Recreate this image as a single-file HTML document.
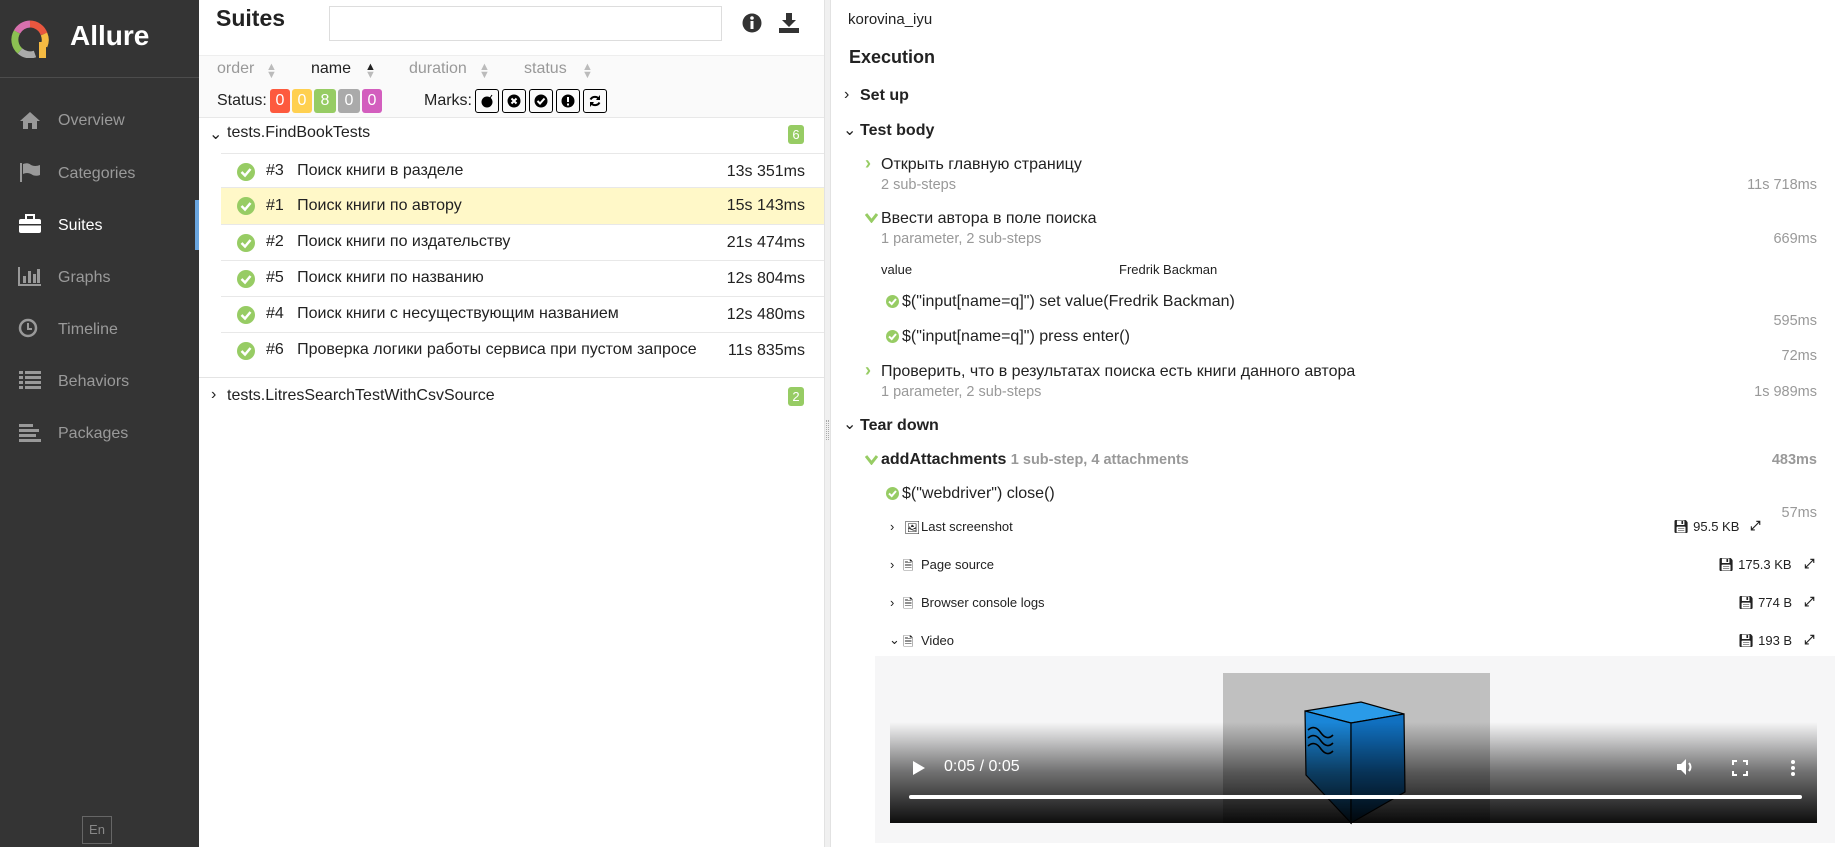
<!DOCTYPE html>
<html><head><meta charset="utf-8"><style>
*{box-sizing:border-box;margin:0;padding:0}
body{width:1835px;height:847px;overflow:hidden;font-family:"Liberation Sans","Noto Sans CJK SC",sans-serif;color:#222;background:#fff;position:relative;font-size:16px}
.a{position:absolute;white-space:nowrap}
#side{position:absolute;left:0;top:0;width:199px;height:847px;background:#343434}
.nav{position:absolute;left:58px;color:#9a9a9a;font-size:16px}
.ni{position:absolute;left:18px;width:24px;height:20px}
.row{position:absolute;left:221px;width:603px;height:36px;border-top:1px solid #e8e8e8}
.row .ck{position:absolute;left:16px;top:9px}
.row .t{position:absolute;right:19px;top:9px}
.gr{color:#999;font-size:14.5px}
.ms{position:absolute;right:18px;color:#999;font-size:14.5px}
.att{font-size:13px}
.sa{position:absolute;color:#bbb;font-size:11px;line-height:8px;top:3px}
</style></head><body>
<div id="side">
 <svg class="a" style="left:10px;top:20px" width="40" height="38" viewBox="0 0 40 38">
  <path d="M20 4 A15 15 0 0 1 34 14" stroke="#e9573f" stroke-width="7" fill="none"/>
  <path d="M34 14 A15 15 0 0 1 34 26" stroke="#f6bb42" stroke-width="7" fill="none"/>
  <path d="M20 4 A15 15 0 0 0 7 12" stroke="#d770ad" stroke-width="7" fill="none"/>
  <path d="M7 12 A15 15 0 0 0 10 31" stroke="#8cc152" stroke-width="7" fill="none"/>
  <path d="M10 31 A15 15 0 0 0 25 34" stroke="#aaa" stroke-width="7" fill="none"/>
  <rect x="29" y="22" width="7" height="16" fill="#f6bb42"/>
 </svg>
 <div class="a" style="left:70px;top:20px;color:#fff;font-size:28px;font-weight:bold">Allure</div>
 <div class="a" style="left:0;top:77px;width:199px;height:1px;background:#4c4c4c"></div>
 <div class="a" style="left:195px;top:200px;width:4px;height:50px;background:#6aa6e0"></div>
 <svg class="ni" style="top:110px" viewBox="0 0 24 20"><path d="M12 2 L22 11 H19 V19 H14 V13 H10 V19 H5 V11 H2 Z" fill="#999"/></svg>
 <div class="nav" style="top:112px">Overview</div>
 <svg class="ni" style="top:162px" viewBox="0 0 24 20"><rect x="2" y="1" width="2" height="19" fill="#999"/><path d="M5 2 Q10 0 13 3 Q17 5 22 3 V13 Q17 15 13 12 Q9 10 5 12 Z" fill="#999"/></svg>
 <div class="nav" style="top:165px">Categories</div>
 <svg class="ni" style="top:214px" viewBox="0 0 24 20"><rect x="1" y="5" width="22" height="14" rx="2" fill="#fff"/><rect x="8" y="1" width="8" height="5" fill="none" stroke="#fff" stroke-width="2"/><rect x="1" y="10" width="22" height="1.5" fill="#343434"/></svg>
 <div class="nav" style="top:217px;color:#fff">Suites</div>
 <svg class="ni" style="top:266px" viewBox="0 0 24 20"><path d="M1 1 V19 H23" stroke="#999" stroke-width="2" fill="none"/><rect x="5" y="10" width="3" height="7" fill="#999"/><rect x="10" y="5" width="3" height="12" fill="#999"/><rect x="15" y="8" width="3" height="9" fill="#999"/><rect x="19" y="3" width="3" height="14" fill="#999"/></svg>
 <div class="nav" style="top:269px">Graphs</div>
 <svg class="ni" style="top:318px" viewBox="0 0 24 20"><circle cx="10" cy="10" r="8" stroke="#999" stroke-width="2.5" fill="none"/><path d="M10 5 V11 H14" stroke="#999" stroke-width="2" fill="none"/></svg>
 <div class="nav" style="top:321px">Timeline</div>
 <svg class="ni" style="top:370px" viewBox="0 0 24 20"><g fill="#999"><rect x="1" y="1" width="4" height="3"/><rect x="7" y="1" width="16" height="3"/><rect x="1" y="6" width="4" height="3"/><rect x="7" y="6" width="16" height="3"/><rect x="1" y="11" width="4" height="3"/><rect x="7" y="11" width="16" height="3"/><rect x="1" y="16" width="4" height="3"/><rect x="7" y="16" width="16" height="3"/></g></svg>
 <div class="nav" style="top:373px">Behaviors</div>
 <svg class="ni" style="top:423px" viewBox="0 0 24 20"><g fill="#999"><rect x="1" y="1" width="14" height="3"/><rect x="1" y="6" width="20" height="3"/><rect x="1" y="11" width="17" height="3"/><rect x="1" y="16" width="22" height="3"/></g></svg>
 <div class="nav" style="top:425px">Packages</div>
 <div class="a" style="left:82px;top:816px;width:30px;height:28px;border:1px solid #666;color:#888;font-size:13px;text-align:center;line-height:26px">En</div>
</div>

<div class="a" style="left:216px;top:5px;font-size:23px;font-weight:bold">Suites</div>
<div class="a" style="left:329px;top:6px;width:393px;height:35px;border:1px solid #ddd"></div>
<svg class="a" style="left:742px;top:13px" width="20" height="20" viewBox="0 0 20 20"><circle cx="10" cy="10" r="9.5" fill="#333"/><rect x="8.5" y="8" width="3" height="8" fill="#fff"/><circle cx="10" cy="5" r="1.8" fill="#fff"/></svg>
<svg class="a" style="left:777px;top:11px" width="24" height="24" viewBox="0 0 24 24"><path d="M9 2 H15 V9 H19 L12 16 L5 9 H9 Z" fill="#333"/><rect x="2" y="17" width="20" height="5" fill="#333"/></svg>
<div class="a" style="left:199px;top:55px;width:625px;height:322px;background:#fafafa;border-top:1px solid #eee"></div>
<div class="a" style="left:199px;top:117px;width:625px;height:1px;background:#e8e8e8"></div>
<div class="a" style="left:199px;top:118px;width:625px;height:259px;background:#fff"></div>
<div class="a" style="left:217px;top:60px;width:600px;font-size:16px;color:#999">
 <span style="position:absolute;left:0">order</span><span class="sa" style="left:49px">▲<br>▼</span>
 <span style="position:absolute;left:94px;color:#222">name</span><span class="sa" style="left:148px;color:#222">▲<br><span style="color:#bbb">▼</span></span>
 <span style="position:absolute;left:192px">duration</span><span class="sa" style="left:262px">▲<br>▼</span>
 <span style="position:absolute;left:307px">status</span><span class="sa" style="left:365px">▲<br>▼</span>
</div>
<div class="a" style="left:217px;top:92px;font-size:16px">Status:</div>
<div class="a" style="left:270px;top:89px;font-size:16px;color:#fff;display:flex;gap:2px">
 <span style="background:#fd5a3e;width:20px;height:24px;text-align:center;line-height:24px;border-radius:3px">0</span>
 <span style="background:#ffd050;width:20px;height:24px;text-align:center;line-height:24px;border-radius:3px">0</span>
 <span style="background:#97cc64;width:22px;height:24px;text-align:center;line-height:24px;border-radius:3px">8</span>
 <span style="background:#aaa;width:22px;height:24px;text-align:center;line-height:24px;border-radius:3px">0</span>
 <span style="background:#d35ebe;width:20px;height:24px;text-align:center;line-height:24px;border-radius:3px">0</span>
</div>
<div class="a" style="left:424px;top:92px;font-size:16px">Marks:</div>
<div class="a" style="left:475px;top:89px;display:flex;gap:3px">
 <span style="width:24px;height:24px;border:1px solid #000;border-radius:3px;display:flex;align-items:center;justify-content:center"><svg width="14" height="14"><circle cx="7" cy="8" r="5.5" fill="#000"/><path d="M10 4 L12 1" stroke="#000"/></svg></span>
 <span style="width:24px;height:24px;border:1px solid #000;border-radius:3px;display:flex;align-items:center;justify-content:center"><svg width="14" height="14"><circle cx="7" cy="7" r="6.5" fill="#000"/><path d="M4.5 4.5 L9.5 9.5 M9.5 4.5 L4.5 9.5" stroke="#fff" stroke-width="2"/></svg></span>
 <span style="width:24px;height:24px;border:1px solid #000;border-radius:3px;display:flex;align-items:center;justify-content:center"><svg width="14" height="14"><circle cx="7" cy="7" r="6.5" fill="#000"/><path d="M3.5 7 L6 9.5 L10.5 4.5" stroke="#fff" stroke-width="2" fill="none"/></svg></span>
 <span style="width:24px;height:24px;border:1px solid #000;border-radius:3px;display:flex;align-items:center;justify-content:center"><svg width="14" height="14"><circle cx="7" cy="7" r="6.5" fill="#000"/><rect x="6" y="3" width="2" height="5" fill="#fff"/><rect x="6" y="9.5" width="2" height="2" fill="#fff"/></svg></span>
 <span style="width:24px;height:24px;border:1px solid #000;border-radius:3px;display:flex;align-items:center;justify-content:center"><svg width="14" height="14"><path d="M11 5 A5 5 0 0 0 2.5 5.5 M3 9 A5 5 0 0 0 11.5 8.5" stroke="#000" stroke-width="2" fill="none"/><path d="M12 1 V6 H8 Z M2 13 V8 H6 Z" fill="#000"/></svg></span>
</div>
<div class="a" style="left:209px;top:124px;font-size:16px">&#8964;</div>
<div class="a" style="left:227px;top:124px;font-size:16px">tests.FindBookTests</div>
<div class="a" style="left:788px;top:125px;width:16px;height:19px;background:#97cc64;color:#fff;font-size:13px;text-align:center;line-height:19px;border-radius:3px">6</div>

<div class="row" style="top:153px"><svg class="ck" width="18" height="18"><circle cx="9" cy="9" r="9" fill="#97cc64"/><path d="M4.5 9 L8 12.5 L13.5 6" stroke="#fff" stroke-width="2.5" fill="none"/></svg><span class="a" style="left:45px;top:8px">#3&nbsp;&nbsp;&nbsp;Поиск книги в разделе</span><span class="t">13s 351ms</span></div>
<div class="row" style="top:187px;background:#fff8c8;height:37px"><svg class="ck" width="18" height="18"><circle cx="9" cy="9" r="9" fill="#97cc64"/><path d="M4.5 9 L8 12.5 L13.5 6" stroke="#fff" stroke-width="2.5" fill="none"/></svg><span class="a" style="left:45px;top:9px">#1&nbsp;&nbsp;&nbsp;Поиск книги по автору</span><span class="t">15s 143ms</span></div>
<div class="row" style="top:224px"><svg class="ck" width="18" height="18"><circle cx="9" cy="9" r="9" fill="#97cc64"/><path d="M4.5 9 L8 12.5 L13.5 6" stroke="#fff" stroke-width="2.5" fill="none"/></svg><span class="a" style="left:45px;top:8px">#2&nbsp;&nbsp;&nbsp;Поиск книги по издательству</span><span class="t">21s 474ms</span></div>
<div class="row" style="top:260px"><svg class="ck" width="18" height="18"><circle cx="9" cy="9" r="9" fill="#97cc64"/><path d="M4.5 9 L8 12.5 L13.5 6" stroke="#fff" stroke-width="2.5" fill="none"/></svg><span class="a" style="left:45px;top:8px">#5&nbsp;&nbsp;&nbsp;Поиск книги по названию</span><span class="t">12s 804ms</span></div>
<div class="row" style="top:296px"><svg class="ck" width="18" height="18"><circle cx="9" cy="9" r="9" fill="#97cc64"/><path d="M4.5 9 L8 12.5 L13.5 6" stroke="#fff" stroke-width="2.5" fill="none"/></svg><span class="a" style="left:45px;top:8px">#4&nbsp;&nbsp;&nbsp;Поиск книги с несуществующим названием</span><span class="t">12s 480ms</span></div>
<div class="row" style="top:332px"><svg class="ck" width="18" height="18"><circle cx="9" cy="9" r="9" fill="#97cc64"/><path d="M4.5 9 L8 12.5 L13.5 6" stroke="#fff" stroke-width="2.5" fill="none"/></svg><span class="a" style="left:45px;top:8px">#6&nbsp;&nbsp;&nbsp;Проверка логики работы сервиса при пустом запросе</span><span class="t">11s 835ms</span></div>
<div class="a" style="left:199px;top:377px;width:625px;height:1px;background:#e4e4e4"></div>
<div class="a" style="left:211px;top:386px;font-size:16px">&#8250;</div>
<div class="a" style="left:227px;top:387px;font-size:16px">tests.LitresSearchTestWithCsvSource</div>
<div class="a" style="left:788px;top:387px;width:16px;height:19px;background:#97cc64;color:#fff;font-size:13px;text-align:center;line-height:19px;border-radius:3px">2</div>

<div class="a" style="left:824px;top:0;width:7px;height:847px;background:#f0f0f0;border-left:1px solid #e2e2e2;border-right:1px solid #e2e2e2"></div>
<div class="a" style="left:826px;top:420px;width:3px;height:20px;border-left:1px dotted #aaa;border-right:1px dotted #aaa"></div>

<div class="a" style="left:848px;top:11px;font-size:15px">korovina_iyu</div>
<div class="a" style="left:849px;top:47px;font-size:18px;font-weight:bold">Execution</div>
<div class="a" style="left:844px;top:86px;font-size:16px">&#8250;</div>
<div class="a" style="left:860px;top:87px;font-size:16px;font-weight:bold">Set up</div>
<div class="a" style="left:843px;top:120px;font-size:16px">&#8964;</div>
<div class="a" style="left:860px;top:122px;font-size:16px;font-weight:bold">Test body</div>

<div class="a" style="left:865px;top:153px;color:#97cc64;font-weight:bold;font-size:18px">&#8250;</div>
<div class="a" style="left:881px;top:156px;font-size:16px">Открыть главную страницу</div>
<div class="a gr" style="left:881px;top:177px">2 sub-steps</div><div class="ms" style="top:177px">11s 718ms</div>

<svg class="a" style="left:865px;top:213px" width="13" height="10"><path d="M1 1 L6.5 8 L12 1" stroke="#97cc64" stroke-width="3" fill="none"/></svg>
<div class="a" style="left:881px;top:210px;font-size:16px">Ввести автора в поле поиска</div>
<div class="a gr" style="left:881px;top:231px">1 parameter, 2 sub-steps</div><div class="ms" style="top:231px">669ms</div>
<div class="a" style="left:881px;top:262px;font-size:13px">value</div>
<div class="a" style="left:1119px;top:262px;font-size:13px">Fredrik Backman</div>

<svg class="a" style="left:886px;top:295px" width="13" height="13"><circle cx="6.5" cy="6.5" r="6.5" fill="#97cc64"/><path d="M3 6.5 L5.7 9 L10 4" stroke="#fff" stroke-width="2" fill="none"/></svg>
<div class="a" style="left:902px;top:293px;font-size:16px">$("input[name=q]") set value(Fredrik Backman)</div>
<div class="ms" style="top:313px">595ms</div>
<svg class="a" style="left:886px;top:330px" width="13" height="13"><circle cx="6.5" cy="6.5" r="6.5" fill="#97cc64"/><path d="M3 6.5 L5.7 9 L10 4" stroke="#fff" stroke-width="2" fill="none"/></svg>
<div class="a" style="left:902px;top:328px;font-size:16px">$("input[name=q]") press enter()</div>
<div class="ms" style="top:348px">72ms</div>

<div class="a" style="left:865px;top:360px;color:#97cc64;font-weight:bold;font-size:18px">&#8250;</div>
<div class="a" style="left:881px;top:363px;font-size:16px">Проверить, что в результатах поиска есть книги данного автора</div>
<div class="a gr" style="left:881px;top:384px">1 parameter, 2 sub-steps</div><div class="ms" style="top:384px">1s 989ms</div>

<div class="a" style="left:843px;top:414px;font-size:16px">&#8964;</div>
<div class="a" style="left:860px;top:417px;font-size:16px;font-weight:bold">Tear down</div>

<svg class="a" style="left:865px;top:455px" width="13" height="10"><path d="M1 1 L6.5 8 L12 1" stroke="#97cc64" stroke-width="3" fill="none"/></svg>
<div class="a" style="left:881px;top:451px;font-size:16px;font-weight:bold">addAttachments <span style="color:#999;font-size:14.5px">1 sub-step, 4 attachments</span></div>
<div class="ms" style="top:452px;font-weight:bold">483ms</div>
<svg class="a" style="left:886px;top:487px" width="13" height="13"><circle cx="6.5" cy="6.5" r="6.5" fill="#97cc64"/><path d="M3 6.5 L5.7 9 L10 4" stroke="#fff" stroke-width="2" fill="none"/></svg>
<div class="a" style="left:902px;top:485px;font-size:16px">$("webdriver") close()</div>
<div class="ms" style="top:505px">57ms</div>

<div class="a att" style="left:890px;top:519px">&#8250;</div>
<div class="a att" style="left:904px;top:520px">&#128444;&#xFE0E;</div>
<div class="a att" style="left:921px;top:519px">Last screenshot</div>
<div class="a att" style="left:1673px;top:519px">&#128190;&#xFE0E; 95.5 KB</div>
<div class="a att" style="left:1750px;top:518px;font-weight:bold">&#10530;</div>

<div class="a att" style="left:890px;top:557px">&#8250;</div>
<div class="a att" style="left:903px;top:557px">&#128462;&#xFE0E;</div>
<div class="a att" style="left:921px;top:557px">Page source</div>
<div class="a att" style="left:1718px;top:557px">&#128190;&#xFE0E; 175.3 KB</div>
<div class="a att" style="left:1804px;top:556px;font-weight:bold">&#10530;</div>

<div class="a att" style="left:890px;top:595px">&#8250;</div>
<div class="a att" style="left:903px;top:595px">&#128462;&#xFE0E;</div>
<div class="a att" style="left:921px;top:595px">Browser console logs</div>
<div class="a att" style="left:1738px;top:595px">&#128190;&#xFE0E; 774 B</div>
<div class="a att" style="left:1804px;top:594px;font-weight:bold">&#10530;</div>

<div class="a att" style="left:889px;top:632px">&#8964;</div>
<div class="a att" style="left:903px;top:633px">&#128462;&#xFE0E;</div>
<div class="a att" style="left:921px;top:633px">Video</div>
<div class="a att" style="left:1738px;top:633px">&#128190;&#xFE0E; 193 B</div>
<div class="a att" style="left:1804px;top:632px;font-weight:bold">&#10530;</div>

<div class="a" style="left:875px;top:656px;width:960px;height:187px;background:#f6f6f7"></div>
<div class="a" style="left:1223px;top:673px;width:267px;height:150px;background:#c0c0c0"></div>
<svg class="a" style="left:1300px;top:700px" width="110" height="125" viewBox="0 0 110 125">
 <polygon points="5,11 61,2 104,14 51,23" fill="#2a9be8" stroke="#000" stroke-width="1.2"/>
 <polygon points="5,11 51,23 51,123 6,75" fill="#1a86d8" stroke="#000" stroke-width="1.2"/>
 <polygon points="51,23 104,14 105,92 51,123" fill="#1070c0" stroke="#000" stroke-width="1.2"/>
 <path d="M8 30 Q15 24 21 33 Q27 41 33 35 M8 38 Q15 32 21 41 Q27 49 33 43 M8 46 Q15 40 21 49 Q27 57 33 51" stroke="#000" stroke-width="1.6" fill="none"/>
</svg>
<div class="a" style="left:890px;top:722px;width:927px;height:101px;background:linear-gradient(rgba(0,0,0,0),rgba(0,0,0,0.55) 50%,rgba(0,0,0,0.95))"></div>
<svg class="a" style="left:912px;top:760px" width="14" height="16"><path d="M1 1 L13 8 L1 15 Z" fill="#fff"/></svg>
<div class="a" style="left:944px;top:758px;color:#fff;font-size:16px">0:05 / 0:05</div>
<svg class="a" style="left:1676px;top:758px" width="20" height="18"><path d="M1 6 H5 L10 1 V17 L5 12 H1 Z" fill="#fff"/><path d="M13 5 Q16 9 13 13" stroke="#fff" stroke-width="2" fill="none"/></svg>
<svg class="a" style="left:1732px;top:760px" width="16" height="16"><path d="M1 5 V1 H5 M11 1 H15 V5 M15 11 V15 H11 M5 15 H1 V11" stroke="#fff" stroke-width="2" fill="none"/></svg>
<svg class="a" style="left:1790px;top:759px" width="6" height="18"><circle cx="3" cy="3" r="2" fill="#fff"/><circle cx="3" cy="9" r="2" fill="#fff"/><circle cx="3" cy="15" r="2" fill="#fff"/></svg>
<div class="a" style="left:909px;top:795px;width:893px;height:4px;background:#fff;border-radius:2px"></div>
</body></html>
